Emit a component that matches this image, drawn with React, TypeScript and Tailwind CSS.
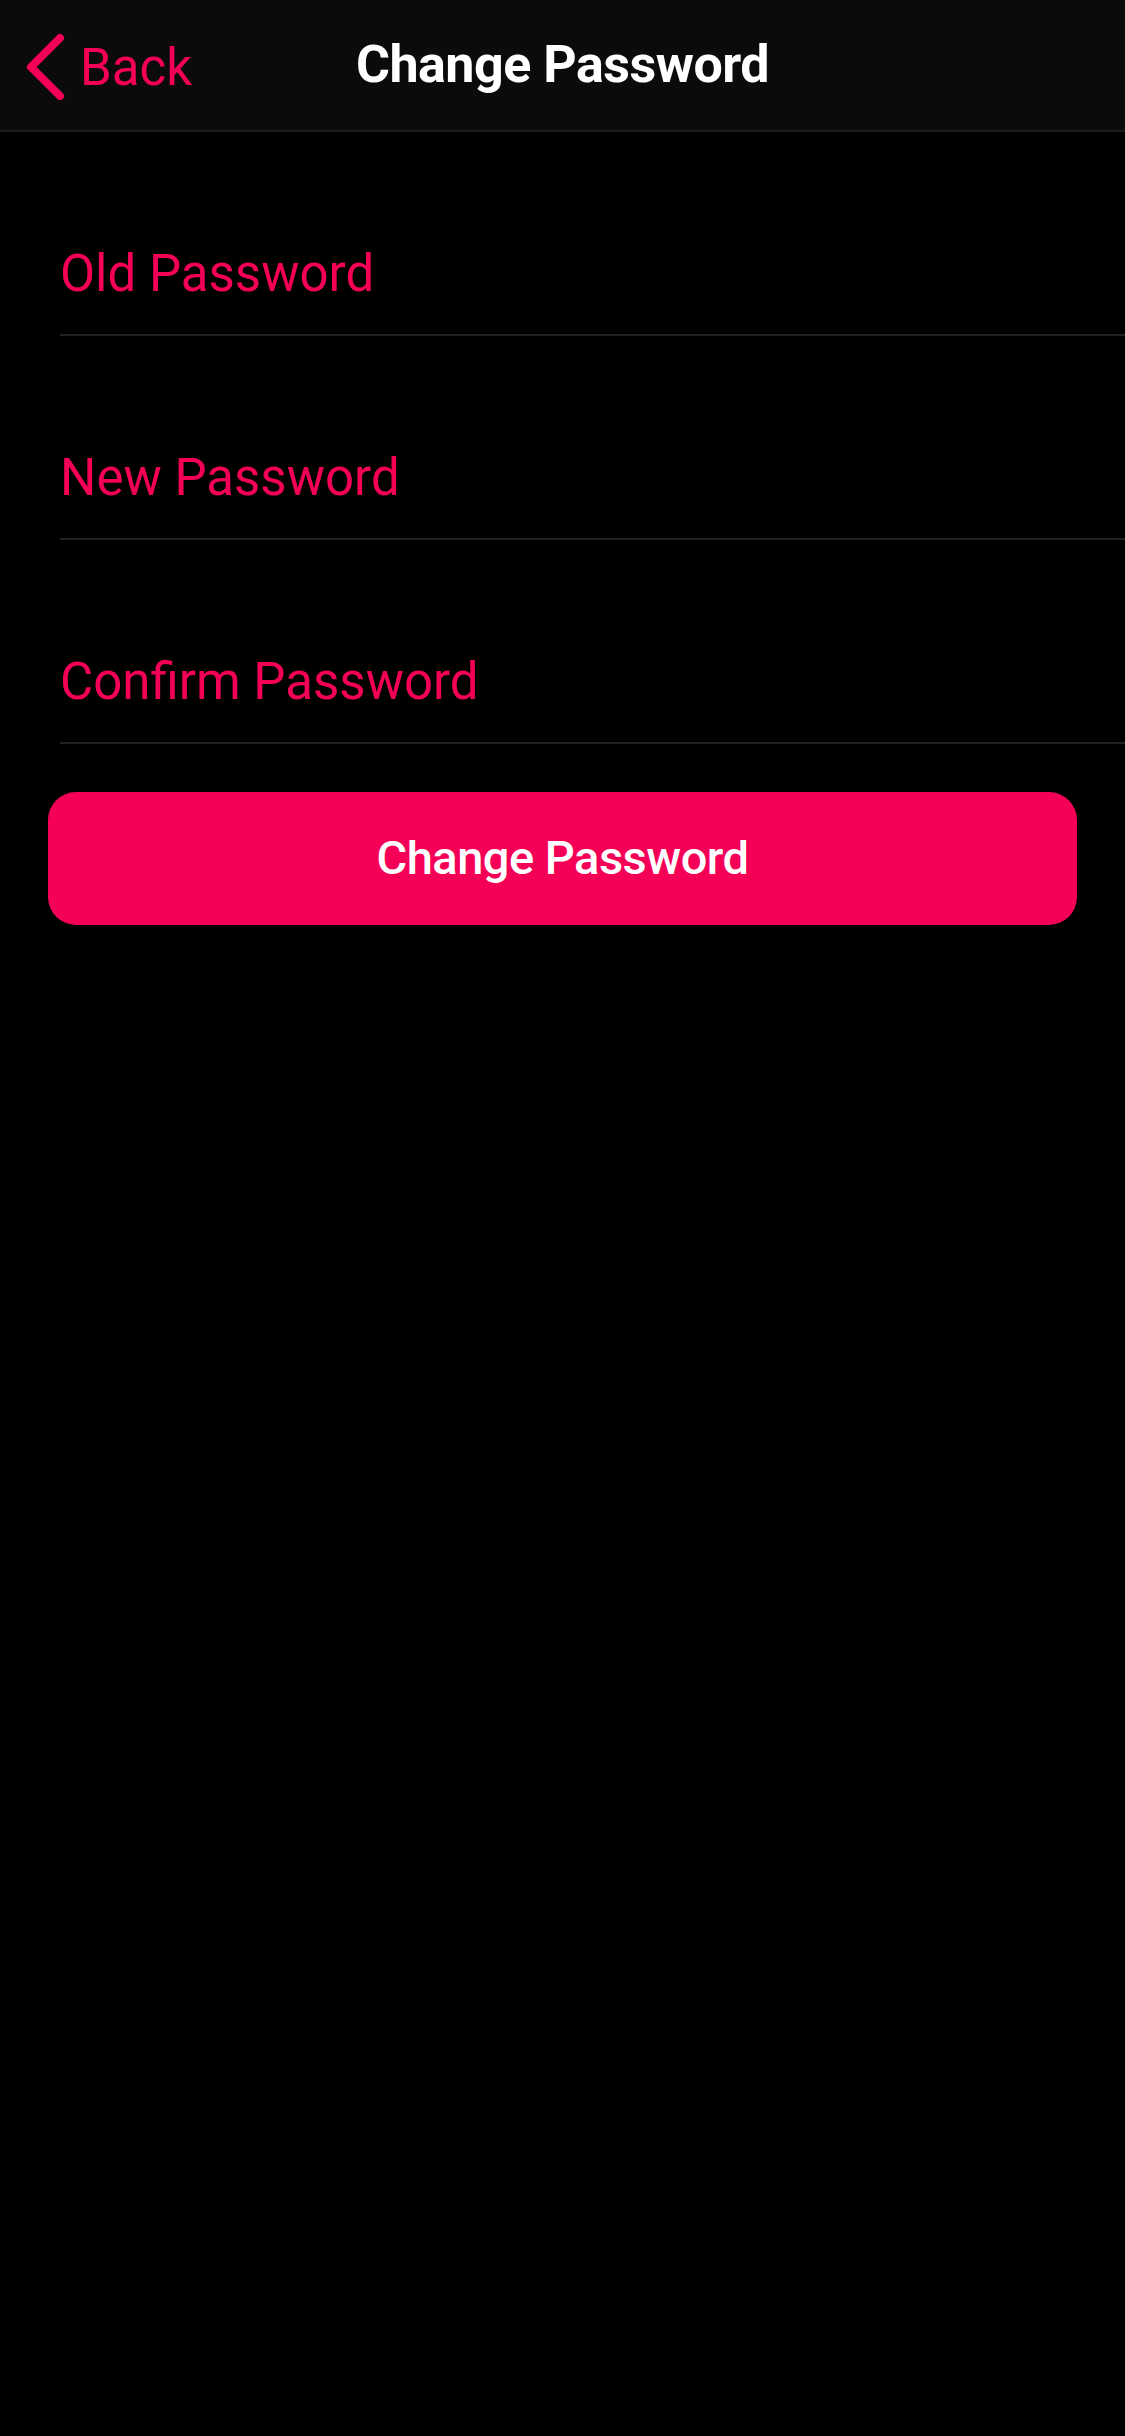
import { useState } from "react";

const fields = [
  { key: "old", placeholder: "Old Password" },
  { key: "new", placeholder: "New Password" },
  { key: "confirm", placeholder: "Confirm Password" },
];

export default function App() {
  const [values, setValues] = useState<Record<string, string>>({});

  return (
    <div className="min-h-[2436px] w-[1125px] bg-black font-['Roboto',sans-serif]">
      {/* Header */}
      <div className="relative flex h-[132px] items-center justify-center border-b-2 border-[#1d1d1d] bg-[#0b0b0b]">
        <button className="absolute left-[26px] top-[34px] flex items-center gap-[14px] text-[#f50057]">
          <svg width="40" height="66" viewBox="0 0 40 66" fill="none">
            <polyline
              points="34,4 5,33 34,62"
              stroke="#f50057"
              strokeWidth="8"
              strokeLinecap="round"
              strokeLinejoin="round"
            />
          </svg>
          <span className="text-[51px] leading-none">Back</span>
        </button>
        <h1 className="text-[52px] font-bold leading-none tracking-[-0.5px] text-white">Change Password</h1>
      </div>

      {/* Form */}
      <div className="flex flex-col pl-[60px]">
        {fields.map((f) => (
          <input
            key={f.key}
            type="password"
            placeholder={f.placeholder}
            value={values[f.key] ?? ""}
            onChange={(e) => setValues({ ...values, [f.key]: e.target.value })}
            className="mt-[80px] h-[124px] border-b-2 border-[#222222] bg-transparent text-[51px] text-white outline-none placeholder:text-[#f50057]"
          />
        ))}
      </div>

      <div className="px-[48px] pt-[48px]">
        <button className="flex h-[133px] w-full items-center justify-center rounded-[28px] bg-[#f50057] text-[47px] font-medium tracking-[-0.5px] text-white">
          Change Password
        </button>
      </div>
    </div>
  );
}
